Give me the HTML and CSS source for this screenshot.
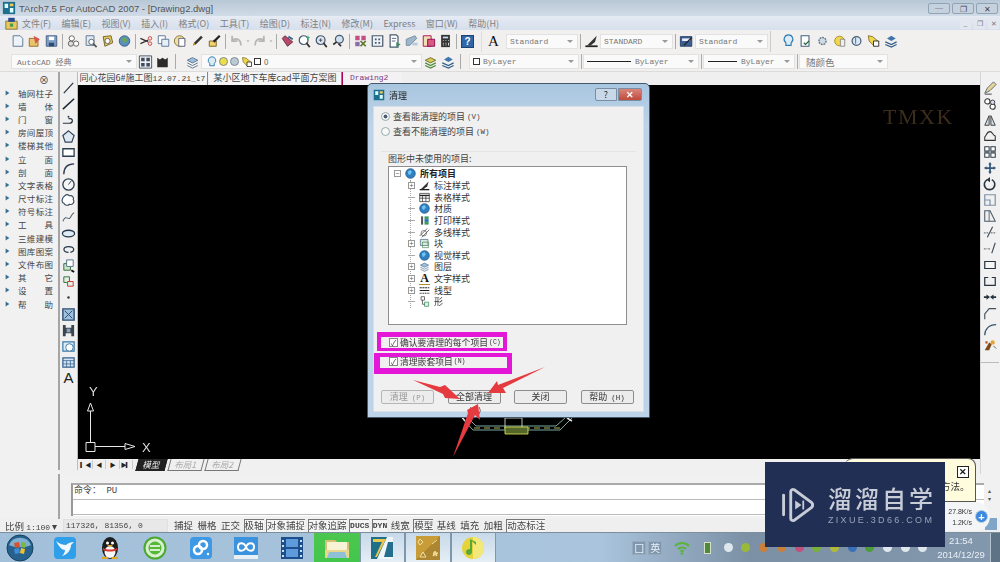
FILE: index.html
```html
<!DOCTYPE html>
<html lang="zh">
<head>
<meta charset="utf-8">
<title>TArch7.5 For AutoCAD 2007</title>
<link rel="stylesheet" href="styles.css">
</head>
<body>
<svg class="sprite" width="0" height="0">
  <symbol id="new" viewBox="0 0 16 16"><path d="M3 2h8l3 3v9H3z" fill="#eef3fa" stroke="#51708f"/></symbol>
  <symbol id="open" viewBox="0 0 16 16"><path d="M2 5h10v9H2z" fill="#e9c46a" stroke="#8a6a25"/><path d="M7 2l7 4-5 5z" fill="#d9534f"/></symbol>
  <symbol id="save" viewBox="0 0 16 16"><path d="M2 2h12v12H2z" fill="#7d9cc4" stroke="#3f5b80"/><path d="M5 3h6v4H5z" fill="#fff"/><path d="M5 10h6v4H5z" fill="#2d4a70"/></symbol>
  <symbol id="print" viewBox="0 0 16 16"><circle cx="6" cy="5" r="3" fill="#fff" stroke="#555"/><circle cx="5" cy="11" r="3" fill="#ddd" stroke="#555"/><circle cx="11" cy="11" r="3" fill="#fff" stroke="#555"/></symbol>
  <symbol id="prev" viewBox="0 0 16 16"><path d="M3 2h9v11H3z" fill="#dfe9f5" stroke="#52708f"/><circle cx="9" cy="9" r="3" fill="#fff" stroke="#555"/><path d="M11 11l4 4" stroke="#555" stroke-width="2"/></symbol>
  <symbol id="pub" viewBox="0 0 16 16"><path d="M3 3l9-1 2 8-9 4z" fill="#e6c85a" stroke="#6d5c22"/><circle cx="8" cy="8" r="3" fill="#fff" stroke="#555"/></symbol>
  <symbol id="globe" viewBox="0 0 16 16"><circle cx="8" cy="8" r="6" fill="#5b8fc4" stroke="#33597f"/><path d="M5 5l5-1 1 4-4 3z" fill="#69a84f"/></symbol>
  <symbol id="cut" viewBox="0 0 16 16"><path d="M1 5l9 4M1 11l9-4" stroke="#333" stroke-width="1.4" fill="none"/><circle cx="12" cy="5" r="2" fill="none" stroke="#c33"/><circle cx="12" cy="11" r="2" fill="none" stroke="#c33"/></symbol>
  <symbol id="copy" viewBox="0 0 16 16"><path d="M2 2h8v9H2z" fill="#fff" stroke="#4f6f93"/><path d="M6 6h8v8H6z" fill="#e6eef8" stroke="#4f6f93"/></symbol>
  <symbol id="paste" viewBox="0 0 16 16"><circle cx="7" cy="8" r="6" fill="#efe1a0" stroke="#7e6e2e"/><path d="M6 5h7v9H6z" fill="#fff" stroke="#557"/></symbol>
  <symbol id="brush" viewBox="0 0 16 16"><path d="M3 13l3-1 8-8-2-2-8 8z" fill="#333"/><path d="M3 13l3-1-2-2z" fill="#d8a21e"/></symbol>
  <symbol id="brush2" viewBox="0 0 16 16"><path d="M2 8h8v6H2z" fill="#f0d36a" stroke="#6f5c20"/><path d="M7 9l7-7" stroke="#222" stroke-width="2.5"/></symbol>
  <symbol id="undo" viewBox="0 0 16 16"><path d="M13 13C13 6 8 4 3 7M3 2v6h6" fill="none" stroke="#b5b5b5" stroke-width="2"/></symbol>
  <symbol id="redo" viewBox="0 0 16 16"><path d="M3 13C3 6 8 4 13 7M13 2v6H7" fill="none" stroke="#b5b5b5" stroke-width="2"/></symbol>
  <symbol id="drop" viewBox="0 0 8 16"><path d="M2 7h4L4 10z" fill="#bbb"/></symbol>
  <symbol id="pan" viewBox="0 0 16 16"><path d="M2 5l6 9 6-5-9-7z" fill="#b9486a" stroke="#5a2a3a"/><path d="M9 3l5 3" stroke="#38618c" stroke-width="2"/></symbol>
  <symbol id="zoom1" viewBox="0 0 16 16"><circle cx="7" cy="7" r="5" fill="#fff" stroke="#44586e" stroke-width="1.4"/><path d="M10 10l4 5" stroke="#333" stroke-width="2"/><path d="M12 2v5M10 4h4" stroke="#2a6"/></symbol>
  <symbol id="zoom2" viewBox="0 0 16 16"><circle cx="7" cy="7" r="5" fill="#dbe7f3" stroke="#44586e" stroke-width="1.4"/><path d="M10 10l4 5" stroke="#333" stroke-width="2"/><path d="M5 7h4M7 5v4" stroke="#444"/></symbol>
  <symbol id="zoom3" viewBox="0 0 16 16"><circle cx="9" cy="6" r="4.5" fill="#cfe0ee" stroke="#44586e" stroke-width="1.4"/><path d="M6 9l-4 3M8 11l3 3" stroke="#333" stroke-width="2"/></symbol>
  <symbol id="prop" viewBox="0 0 16 16"><path d="M2 2h5v5H2zM9 2h5v5H9z" fill="#c44d84"/><path d="M2 9h5v5H2z" fill="#8a6bb1"/><path d="M8 8l6 6M14 8l-6 6" stroke="#5a7a2c" stroke-width="2"/></symbol>
  <symbol id="dc" viewBox="0 0 16 16"><path d="M2 2h12v12H2z" fill="#eef2f6" stroke="#47596d" stroke-width="1.4"/><path d="M5 5h2v2H5zM9 5h2v2H9zM5 9h2v2H5zM9 9h2v2H9z" fill="#47596d"/></symbol>
  <symbol id="tool" viewBox="0 0 16 16"><path d="M3 1h7l2 2v12H3z" fill="#fff" stroke="#485c72" stroke-width="1.4"/><path d="M5 5h5M5 8h4" stroke="#485c72"/><path d="M10 9l5 3-5 3z" fill="#486"/></symbol>
  <symbol id="sheet" viewBox="0 0 16 16"><path d="M2 6l10-4 2 3-8 8H2z" fill="#9fb5c9" stroke="#6f8ba3"/><path d="M9 10h6v3H9z" fill="#b8c9d9"/></symbol>
  <symbol id="mark" viewBox="0 0 16 16"><path d="M2 2h9v12H2z" fill="#f1dfb2" stroke="#a05"/><path d="M7 6h8v8H7z" fill="#d9597f" stroke="#805"/></symbol>
  <symbol id="calc" viewBox="0 0 16 16"><path d="M3 1h10v14H3z" fill="#333"/><path d="M5 3h6v2H5z" fill="#cde"/><path d="M5 7h1v1H5zM8 7h1v1H8zM11 7h1v1h-1zM5 10h1v1H5zM8 10h1v1H8zM11 10h1v3h-1zM5 12h1v1H5zM8 12h1v1H8z" fill="#eee"/></symbol>
  <symbol id="dim" viewBox="0 0 16 16"><path d="M1 14h14" stroke="#222" stroke-width="2"/><path d="M3 13L14 2l-2 7-5 4z" fill="#333"/></symbol>
  <symbol id="tstyle" viewBox="0 0 16 16"><path d="M1 3h13v11H1z" fill="#3a5f92" stroke="#223e66"/><path d="M3 5h9v3H3z" fill="#eef"/><path d="M5 13l9-9" stroke="#222" stroke-width="1.5"/></symbol>
  <symbol id="bulb" viewBox="0 0 16 16"><path d="M8 1a5 5 0 0 0-3 9v3h6v-3a5 5 0 0 0-3-9z" fill="#dcebf5" stroke="#2f7fb5" stroke-width="1.3"/></symbol>
  <symbol id="doc" viewBox="0 0 16 16"><path d="M3 2h9v12H3z" fill="#fff" stroke="#40617f" stroke-width="1.2"/><path d="M6 10l2 2 4-4" stroke="#263" fill="none" stroke-width="1.4"/></symbol>
  <symbol id="gear" viewBox="0 0 16 16"><circle cx="8" cy="8" r="4" fill="#cfdbe6" stroke="#5b7186" stroke-width="1.6" stroke-dasharray="2 1"/></symbol>
  <symbol id="yel" viewBox="0 0 16 16"><circle cx="8" cy="8" r="5.5" fill="#f2d64b" stroke="#a08820"/><path d="M9 6h5v8H9z" fill="#eee" stroke="#888"/></symbol>
  <symbol id="lock" viewBox="0 0 16 16"><circle cx="8" cy="8" r="5" fill="#dce7f2" stroke="#45607f" stroke-width="1.4"/><path d="M7 4v7" stroke="#45607f"/></symbol>
  <symbol id="layertag" viewBox="0 0 16 16"><path d="M2 2l5 1 7 6-5 5-6-6z" fill="#f0d54e" stroke="#7d7022"/><path d="M8 8h6v6H8z" fill="#fff" stroke="#222"/></symbol>
  <symbol id="stack" viewBox="0 0 16 16"><path d="M2 6l6-3 6 3-6 3z" fill="#9ec0dd" stroke="#52708c"/><path d="M2 9l6 3 6-3M2 12l6 3 6-3" fill="none" stroke="#52708c"/></symbol>
  <symbol id="stack2" viewBox="0 0 16 16"><path d="M2 6l6-3 6 3-6 3z" fill="#d6c955" stroke="#5e6d26"/><path d="M2 9l6 3 6-3M2 12l6 3 6-3" fill="none" stroke="#4f8a3a" stroke-width="1.4"/></symbol>
  <symbol id="stack3" viewBox="0 0 16 16"><path d="M4 5l5-3 5 3-5 3z" fill="#3e76ad"/><path d="M2 9l7 3 6-3M2 12l7 3 6-3" fill="none" stroke="#345f8a" stroke-width="1.4"/></symbol>
  <symbol id="qr" viewBox="0 0 16 16"><path d="M1 1h14v14H1z" fill="#eee" stroke="#3d4c5e"/><path d="M3 3h4v4H3zM9 3h4v4H9zM3 9h4v4H3zM9 9h4v4H9z" fill="#3d4c5e"/></symbol>
  <symbol id="bl" viewBox="0 0 16 16"><path d="M2 3l3 2 3-2 3 2 3-2v11H2z" fill="#2b2b2b"/></symbol>
  <symbol id="l" viewBox="0 0 16 16"><path d="M3 14L13 3" stroke="#2a3440" stroke-width="1.3"/></symbol>
  <symbol id="l2" viewBox="0 0 16 16"><path d="M2 14L14 3" stroke="#1d2732" stroke-width="1.6"/></symbol>
  <symbol id="pl" viewBox="0 0 16 16"><path d="M2 12h7c4 0 4-5 1-5H8" fill="none" stroke="#2a3440" stroke-width="1.3"/><circle cx="8" cy="5" r="1" fill="#2a3440"/></symbol>
  <symbol id="poly" viewBox="0 0 16 16"><path d="M8 2l6 5-2.500 7h-7L2 7z" fill="#dfe9f2" stroke="#32465c" stroke-width="1.3"/></symbol>
  <symbol id="rect" viewBox="0 0 16 16"><path d="M2 4h12v8H2z" fill="#fff" stroke="#2f3e4f" stroke-width="1.4"/></symbol>
  <symbol id="arc" viewBox="0 0 16 16"><path d="M3 14C3 7 7 3 14 3" fill="none" stroke="#2f3e4f" stroke-width="1.4"/></symbol>
  <symbol id="circ" viewBox="0 0 16 16"><circle cx="8" cy="8" r="6" fill="#f5f5f5" stroke="#2f3e4f" stroke-width="1.4"/><path d="M8 8l3-4" stroke="#2f3e4f"/></symbol>
  <symbol id="cloud" viewBox="0 0 16 16"><path d="M4 3c2-2 4-1 5 0 3-1 5 2 4 4 2 3-1 6-4 5-2 2-5 1-6-1-3-1-2-6 1-8z" fill="#fff" stroke="#3a4a5a" stroke-width="1.2"/></symbol>
  <symbol id="spl" viewBox="0 0 16 16"><path d="M2 12c3-7 5-2 7-3s2-5 5-6" fill="none" stroke="#55626f" stroke-width="1.1"/></symbol>
  <symbol id="ell" viewBox="0 0 16 16"><ellipse cx="8" cy="8" rx="6.500" ry="3.500" fill="#dfeaf3" stroke="#25384c" stroke-width="1.4"/></symbol>
  <symbol id="ellarc" viewBox="0 0 16 16"><path d="M8 11C2 11 1 5 8 5s7 5 2 6" fill="none" stroke="#25384c" stroke-width="1.3"/></symbol>
  <symbol id="ins" viewBox="0 0 16 16"><path d="M3 6h7v7H3z" fill="#cfe3cf" stroke="#2d6b34"/><path d="M6 2h7v7H6z" fill="#fff" stroke="#52708c"/><path d="M11 13l3 2" stroke="#111" stroke-width="2"/></symbol>
  <symbol id="blk" viewBox="0 0 16 16"><path d="M3 3h6v6H3z" fill="#e3f0e3" stroke="#2f6f35"/><path d="M7 8h6v5H7z" fill="#e3f0e3" stroke="#c33"/></symbol>
  <symbol id="pt" viewBox="0 0 16 16"><circle cx="8" cy="8" r="1.300" fill="#2c3a48"/></symbol>
  <symbol id="hatch" viewBox="0 0 16 16"><path d="M2 2h12v12H2z" fill="#9fc1de" stroke="#2c4d72" stroke-width="1.5"/><path d="M4 12l8-8M4 4l8 8" stroke="#2c4d72"/></symbol>
  <symbol id="grad" viewBox="0 0 16 16"><path d="M2 2h3v3h6V2h3v12h-3v-3H5v3H2z" fill="#3b4450"/><path d="M6 6h4v4H6z" fill="#8ba2b7"/></symbol>
  <symbol id="reg" viewBox="0 0 16 16"><path d="M2 3h12v10H2z" fill="#dfeef6" stroke="#3d7aa6" stroke-width="1.3"/><circle cx="9" cy="9" r="4" fill="#fff" stroke="#3d7aa6"/></symbol>
  <symbol id="tab" viewBox="0 0 16 16"><path d="M2 3h12v10H2z" fill="#d4e4f2" stroke="#34628f" stroke-width="1.3"/><path d="M2 6h12M6 6v7M10 6v7M2 9.500h12" stroke="#34628f" stroke-width=".8"/></symbol>
  <symbol id="erase" viewBox="0 0 16 16"><path d="M2 14l3-6 7-7 3 3-7 7z" fill="#e4d69a" stroke="#55606a"/><path d="M2 15h8" stroke="#333"/></symbol>
  <symbol id="copy2" viewBox="0 0 16 16"><circle cx="5" cy="5" r="3" fill="#fff" stroke="#333" stroke-width="1.2"/><circle cx="11" cy="11" r="3" fill="#fff" stroke="#333" stroke-width="1.2"/><circle cx="11" cy="6" r="2.500" fill="#dde" stroke="#333"/></symbol>
  <symbol id="mirror" viewBox="0 0 16 16"><path d="M7 3L2 14h5zM9 3l5 11H9z" fill="#cfdae4" stroke="#333"/></symbol>
  <symbol id="offset" viewBox="0 0 16 16"><path d="M2 13V9c2-1 2-6 6-6 3 0 3 4 6 5v5z" fill="#f2f2f2" stroke="#333" stroke-width="1.2"/></symbol>
  <symbol id="array" viewBox="0 0 16 16"><path d="M2 2h5v5H2zM9 2h5v5H9zM2 9h5v5H2zM9 9h5v5H9z" fill="#fff" stroke="#2f3d4b" stroke-width="1.2"/></symbol>
  <symbol id="move" viewBox="0 0 16 16"><path d="M8 1l2 3H9v3h3V6l3 2-3 2V9H9v3h1l-2 3-2-3h1V9H4v1L1 8l3-2v1h3V4H6z" fill="#35587c"/></symbol>
  <symbol id="rot" viewBox="0 0 16 16"><path d="M5 3a6 6 0 1 0 5 0" fill="none" stroke="#27343f" stroke-width="1.8"/><path d="M8 0v6L4 3z" fill="#27343f"/></symbol>
  <symbol id="scale" viewBox="0 0 16 16"><path d="M2 2h12v12H2z" fill="#f0f0f0" stroke="#7e93a6" stroke-width="1.4"/><path d="M2 8h6v6" fill="none" stroke="#7e93a6" stroke-width="1.4"/></symbol>
  <symbol id="stretch" viewBox="0 0 16 16"><path d="M2 2h6l6 12H2z" fill="#f0f0f0" stroke="#4a5a69" stroke-width="1.2"/><path d="M7 2v12" stroke="#4a5a69"/></symbol>
  <symbol id="trim" viewBox="0 0 16 16"><path d="M1 9h5M9 9h6" stroke="#3e4a55" stroke-dasharray="2 1"/><path d="M5 14L11 2" stroke="#3e4a55" stroke-width="1.2"/></symbol>
  <symbol id="ext" viewBox="0 0 16 16"><path d="M1 9h4M6 9h3" stroke="#3e4a55" stroke-dasharray="2 1"/><path d="M10 14L14 2" stroke="#3e4a55" stroke-width="1.2"/></symbol>
  <symbol id="brk" viewBox="0 0 16 16"><path d="M2 4h12v8H2z" fill="#f6f6f6" stroke="#27343f" stroke-width="1.4"/></symbol>
  <symbol id="brk2" viewBox="0 0 16 16"><path d="M6 4H2v9h12V4h-4" fill="none" stroke="#27343f" stroke-width="1.4"/></symbol>
  <symbol id="join" viewBox="0 0 16 16"><path d="M1 8h5M10 8h5" stroke="#27343f" stroke-width="2"/><path d="M8 8L4 5v6zM8 8l4-3v6z" fill="#27343f"/></symbol>
  <symbol id="chamf" viewBox="0 0 16 16"><path d="M2 15V9l5-6h8" fill="none" stroke="#45515c" stroke-width="1.3"/></symbol>
  <symbol id="fillet" viewBox="0 0 16 16"><path d="M2 15C2 8 7 3 15 3" fill="none" stroke="#36536f" stroke-width="1.4"/></symbol>
  <symbol id="expl" viewBox="0 0 16 16"><path d="M2 14l5-9 3 2-3 7z" fill="#7a4a1e"/><circle cx="11" cy="5" r="2.500" fill="#e2a53a"/><circle cx="4" cy="5" r="1.500" fill="#c63"/><path d="M12 9l3 3" stroke="#555"/></symbol>
  <symbol id="ptri" viewBox="0 0 8 8"><path d="M1 0l6 4-6 4z" fill="#3a6f95"/></symbol>
  <symbol id="acad" viewBox="0 0 16 16"><path d="M1 1h14v14H1z" fill="#1e6f8f"/><path d="M3 3h4v5H3zM9 8h4v5H9z" fill="#dff"/><path d="M9 3h4v3H9z" fill="#ec5"/></symbol>
  <symbol id="menuic" viewBox="0 0 16 16"><path d="M1 5h14v10H1z" fill="#e7c860" stroke="#7b6a24"/><path d="M4 1h8v5H4z" fill="#274a8f"/><path d="M6 8h4v4H6z" fill="#4a9c48"/></symbol>
  <symbol id="earth" viewBox="0 0 16 16"><circle cx="8" cy="8" r="7" fill="#2f81c4" stroke="#1d4f7d"/><path d="M4 5l4-2 2 3-3 4-2-1z" fill="#6fc3ef"/></symbol>
  <symbol id="shape" viewBox="0 0 16 16"><path d="M3 1h5v5H3z" fill="#fff" stroke="#333"/><path d="M8 9h6v6H8z" fill="#dff0e0" stroke="#2b8a55"/><path d="M5 6v6h3" fill="none" stroke="#333"/></symbol>
  <symbol id="color" viewBox="0 0 16 16"><path d="M3 2h3v12H3z" fill="#555"/><path d="M8 2h6v4H8z" fill="#3a9a58"/><path d="M8 6h6v4H8z" fill="#2a6fb0"/><path d="M8 10h6v4H8z" fill="#3a9a58"/></symbol>
  <symbol id="mls" viewBox="0 0 16 16"><path d="M1 13L12 2M4 15L15 4" stroke="#333" fill="none"/><circle cx="7" cy="9" r="4" fill="none" stroke="#555"/></symbol>
  <symbol id="block" viewBox="0 0 16 16"><path d="M2 2h11v9H2z" fill="#d9e9dd" stroke="#41617f"/><path d="M5 6h9v8H5z" fill="none" stroke="#4c8a59"/></symbol>
  <symbol id="lt" viewBox="0 0 16 16"><path d="M1 4h14" stroke="#222" stroke-width="1.5" stroke-dasharray="3 1"/><path d="M1 8h14" stroke="#222" stroke-width="1.5"/><path d="M1 12h14" stroke="#222" stroke-width="1.5" stroke-dasharray="1.500 1"/></symbol>
  <symbol id="table" viewBox="0 0 16 16"><path d="M1 2h14v12H1z" fill="#fff" stroke="#222"/><path d="M1 5h14" stroke="#222" stroke-width="2"/><path d="M1 9h14M5 5v9M10 5v9" stroke="#222"/></symbol>

  <symbol id="t-orb" viewBox="0 0 28 28"><circle cx="14" cy="14" r="13" fill="#27628f" stroke="#16405f"/><path d="M3 11a12 12 0 0 1 22 0c-6 3-16 3-22 0z" fill="#7fb0d0"/><path d="M8 9l5-1 1 5-5 1z" fill="#d9522f"/><path d="M15 8l5 1-1 5-4-1z" fill="#7cb83a"/><path d="M8 15l5-1 1 5-5 1z" fill="#3f8bd8"/><path d="M15 14l4 1-1 5-4-1z" fill="#eec12f"/></symbol>
  <symbol id="t-bird" viewBox="0 0 24 24"><rect x="1" y="1" width="22" height="22" rx="4" fill="#2f9fea"/><path d="M3 5c4 3 7 4 10 4 2-2 5-3 8-3l-3 3c0 6-5 10-9 11 2-2 3-4 3-6-3 0-6-3-9-9z" fill="#f2f8fd"/></symbol>
  <symbol id="t-qq" viewBox="0 0 24 24"><ellipse cx="12" cy="12" rx="8" ry="11" fill="#1d1d1d"/><ellipse cx="12" cy="16" rx="5.500" ry="6" fill="#f7f7f7"/><circle cx="9.500" cy="7" r="1.500" fill="#fff"/><circle cx="14.500" cy="7" r="1.500" fill="#fff"/><path d="M9 9h6l-3 2z" fill="#e8a51e"/><path d="M5 12c4 2 10 2 14 0v2c-4 2-10 2-14 0z" fill="#d8342c"/><path d="M4 21h6v2H4zM14 21h6v2h-6z" fill="#e8a51e"/></symbol>
  <symbol id="t-green" viewBox="0 0 24 24"><circle cx="12" cy="12" r="10.500" fill="#d9f0ce" stroke="#4aa82f" stroke-width="2"/><circle cx="12" cy="12" r="6.500" fill="#55b83a"/><path d="M7 10h10M7 14h10" stroke="#fff" stroke-width="1.500"/></symbol>
  <symbol id="t-baidu" viewBox="0 0 24 24"><rect x="1" y="1" width="22" height="22" rx="4" fill="#3f98e4"/><circle cx="9" cy="14" r="4" fill="none" stroke="#fff" stroke-width="2.500"/><circle cx="14" cy="9" r="4" fill="none" stroke="#fff" stroke-width="2.500"/><circle cx="19" cy="18" r="1.200" fill="#fff"/></symbol>
  <symbol id="t-cloud" viewBox="0 0 24 24"><rect x="0" y="1" width="24" height="18" fill="#3b92de"/><path d="M0 19h24v4H0z" fill="#e8f0f6"/><path d="M4 11c0-5 6-5 8 0s8 5 8 0-6-5-8 0-8 5-8 0z" fill="none" stroke="#fff" stroke-width="2"/></symbol>
  <symbol id="t-film" viewBox="0 0 24 24"><rect x="1" y="1" width="22" height="22" fill="#1c4f8c"/><path d="M6 3h12v8H6zM6 13h12v8H6z" fill="#5e9bdc"/><path d="M2 4h2v2H2zM2 9h2v2H2zM2 14h2v2H2zM2 19h2v2H2zM20 4h2v2h-2zM20 9h2v2h-2zM20 14h2v2h-2zM20 19h2v2h-2z" fill="#cfe0f2"/></symbol>
  <symbol id="t-folder" viewBox="0 0 28 24"><path d="M2 4h10l2 2h12v16H2z" fill="#d7c177"/><path d="M4 6h20v9H4z" fill="#f9f3d6"/><path d="M2 14h24v8H2z" fill="#e9d68c"/><path d="M6 16h16l2 6H4z" fill="#8fc0d8"/></symbol>
  <symbol id="t-seven" viewBox="0 0 24 24"><path d="M1 1h22v22H1z" fill="#eef6fa"/><path d="M1 1h16L7 23H1z" fill="#1e7089"/><path d="M3 3h13L7 21H5l7-15H3z" fill="#e9c84f"/><path d="M18 6h5v15h-9z" fill="#236f8c"/></symbol>
  <symbol id="t-gold" viewBox="0 0 24 24"><rect x="0" y="0" width="24" height="24" fill="#ad8631"/><path d="M0 0h24L0 24z" fill="#c89d38"/><path d="M4 3l3 3-3 3-2-3zM16 8l5-4M4 21l3-5 3 5zM17 20l2-5 2 5-4-3h5z" fill="none" stroke="#f2e1a6"/></symbol>
  <symbol id="t-music" viewBox="0 0 24 24"><circle cx="12" cy="12" r="11" fill="#e6d23a"/><path d="M12 1a11 11 0 0 1 0 22z" fill="#f2e97a"/><path d="M11 5v11a3 3 0 1 1-2-2.800V3l6 3v3z" fill="#55a83a"/></symbol>
</svg>

<div class="app">
  <header class="title">
    <svg class="title-ic"><use href="#acad"/></svg>
    <span class="title-text">TArch7.5 For AutoCAD 2007 - [Drawing2.dwg]</span>
    <div class="win-btns"><i class="wb">&#9472;</i><i class="wb w2">&#10064;</i><i class="wb">&#10005;</i></div>
  </header>
  <nav class="menu">
    <svg class="menu-ic"><use href="#menuic"/></svg>
    <span>文件(F)</span><span>编辑(E)</span><span>视图(V)</span><span>插入(I)</span><span>格式(O)</span><span>工具(T)</span><span>绘图(D)</span><span>标注(N)</span><span>修改(M)</span><span>Express</span><span>窗口(W)</span><span>帮助(H)</span>
    <div class="doc-btns"><i>_</i><i>&#10064;</i><i>&#10005;</i></div>
  </nav>

  <div class="tb tb1">
    <svg class="ic"><use href="#new"/></svg><svg class="ic"><use href="#open"/></svg><svg class="ic"><use href="#save"/></svg><b class="sep"></b>
    <svg class="ic"><use href="#print"/></svg><svg class="ic"><use href="#prev"/></svg><svg class="ic"><use href="#pub"/></svg><svg class="ic"><use href="#globe"/></svg><b class="sep"></b>
    <svg class="ic"><use href="#cut"/></svg><svg class="ic"><use href="#copy"/></svg><svg class="ic"><use href="#paste"/></svg><svg class="ic"><use href="#brush"/></svg><svg class="ic"><use href="#brush2"/></svg><b class="sep"></b>
    <svg class="ic"><use href="#undo"/></svg><svg class="dr"><use href="#drop"/></svg><svg class="ic"><use href="#redo"/></svg><svg class="dr"><use href="#drop"/></svg><b class="sep"></b>
    <svg class="ic"><use href="#pan"/></svg><svg class="ic"><use href="#zoom1"/></svg><svg class="ic"><use href="#zoom2"/></svg><svg class="ic"><use href="#zoom3"/></svg><b class="sep"></b>
    <svg class="ic"><use href="#prop"/></svg><svg class="ic"><use href="#dc"/></svg><svg class="ic"><use href="#tool"/></svg><svg class="ic"><use href="#sheet"/></svg><svg class="ic"><use href="#mark"/></svg><svg class="ic"><use href="#calc"/></svg><b class="sep"></b>
    <span class="ic-help">?</span><b class="bar"></b>
    <span class="ic-a">A</span>
    <div class="combo c72 mono"><span>Standard</span></div><b class="sep"></b>
    <svg class="ic"><use href="#dim"/></svg>
    <div class="combo c73 mono"><span>STANDARD</span></div><b class="sep"></b>
    <svg class="ic"><use href="#tstyle"/></svg>
    <div class="combo c73 mono"><span>Standard</span></div><b class="bar2"></b>
    <svg class="ic first"><use href="#bulb"/></svg><svg class="ic"><use href="#doc"/></svg><svg class="ic"><use href="#gear"/></svg><svg class="ic"><use href="#yel"/></svg><svg class="ic"><use href="#lock"/></svg><svg class="ic"><use href="#layertag"/></svg><svg class="ic"><use href="#stack3"/></svg>
  </div>

  <div class="tb tb2">
    <div class="combo c126"><span class="mono">AutoCAD 经典</span></div>
    <svg class="ic"><use href="#qr"/></svg><svg class="ic"><use href="#bl"/></svg><b class="sep wide"></b>
    <svg class="ic"><use href="#stack"/></svg>
    <div class="combo c221">
      <svg class="mini"><use href="#bulb"/></svg><i class="dot y"></i><i class="dot g"></i><svg class="mini"><use href="#layertag"/></svg><i class="sq"></i><span class="layer0">0</span>
    </div>
    <svg class="ic"><use href="#stack2"/></svg><svg class="ic"><use href="#stack3"/></svg><b class="sep wide"></b>
    <div class="combo c110 mono"><i class="sq"></i><span>ByLayer</span></div><b class="sep"></b>
    <div class="combo c116 mono"><i class="ln l1"></i><span>ByLayer</span></div><b class="sep"></b>
    <div class="combo c92 mono"><i class="ln l2"></i><span>ByLayer</span></div><b class="sep"></b>
    <div class="combo c89"><span class="rand">随颜色</span></div>
  </div>

  <div class="work">
    <aside class="tarch">
      <div class="tarch-close">&#8855;</div>
      <ul class="tarch-list">
        <li><svg><use href="#ptri"/></svg><span>轴网柱子</span></li>
        <li><svg><use href="#ptri"/></svg><span>墙 体</span></li>
        <li><svg><use href="#ptri"/></svg><span>门 窗</span></li>
        <li><svg><use href="#ptri"/></svg><span>房间屋顶</span></li>
        <li><svg><use href="#ptri"/></svg><span>楼梯其他</span></li>
        <li><svg><use href="#ptri"/></svg><span>立 面</span></li>
        <li><svg><use href="#ptri"/></svg><span>剖 面</span></li>
        <li><svg><use href="#ptri"/></svg><span>文字表格</span></li>
        <li><svg><use href="#ptri"/></svg><span>尺寸标注</span></li>
        <li><svg><use href="#ptri"/></svg><span>符号标注</span></li>
        <li><svg><use href="#ptri"/></svg><span>工 具</span></li>
        <li><svg><use href="#ptri"/></svg><span>三维建模</span></li>
        <li><svg><use href="#ptri"/></svg><span>图库图案</span></li>
        <li><svg><use href="#ptri"/></svg><span>文件布图</span></li>
        <li><svg><use href="#ptri"/></svg><span>其 它</span></li>
        <li><svg><use href="#ptri"/></svg><span>设 置</span></li>
        <li><svg><use href="#ptri"/></svg><span>帮 助</span></li>
      </ul>
    </aside>
    <div class="vtb">
      <svg><use href="#l"/></svg><svg><use href="#l2"/></svg><svg><use href="#pl"/></svg><svg><use href="#poly"/></svg><svg><use href="#rect"/></svg><svg><use href="#arc"/></svg><svg><use href="#circ"/></svg><svg><use href="#cloud"/></svg><svg><use href="#spl"/></svg><svg><use href="#ell"/></svg><svg><use href="#ellarc"/></svg><svg><use href="#ins"/></svg><svg><use href="#blk"/></svg><svg><use href="#pt"/></svg><svg><use href="#hatch"/></svg><svg><use href="#grad"/></svg><svg><use href="#reg"/></svg><svg><use href="#tab"/></svg><span class="vtb-a">A</span>
    </div>
    <main class="center">
      <div class="tabs">
        <span class="tab t1">同心花园6#施工图<em>12.07.21_t7</em></span>
        <span class="tab t2">某小区地下车库cad平面方案图</span>
        <span class="tab t3">Drawing2</span>
      </div>
      <div class="canvas">
        <div class="ucs">
          <span class="ucs-y">Y</span><span class="ucs-x">X</span>
          <svg width="80" height="62" viewBox="0 0 80 62"><path d="M5.500 47V16M2.500 16l3-8 3 8zM10 51.500h30M40 48.500l10 3-10 3z" fill="none" stroke="#e8e8e8"/><path d="M1 47.500h9v9H1z" fill="none" stroke="#e8e8e8"/></svg>
        </div>
        <div class="tmxk">TMXK</div>
        <svg class="plan" width="130" height="24" viewBox="0 0 130 24">
          <path d="M2 2l11 12h87l12-12M8 2l8 8h80l9-8" fill="none" stroke="#9ad5c8" stroke-width=".8"/>
          <path d="M14 12h88" stroke="#e6e26a" stroke-width=".8" stroke-dasharray="6 4"/>
          <path d="M45 2h17v10H45z" fill="none" stroke="#e8f0d0" stroke-width=".8"/>
          <path d="M45 11h23v7H45z" fill="#55662a" stroke="#e8ee55" stroke-width=".8"/>
          <path d="M2 1l3 4M107 2l5 3" stroke="#ddd" stroke-width="1.500"/>
        </svg>
      </div>
      <div class="layouts">
        <span class="nav">&#9614;&#9664;</span><span class="nav">&#9664;</span><span class="nav">&#9654;</span><span class="nav">&#9654;&#9614;</span>
        <span class="lt active">模型</span><span class="lt">布局1</span><span class="lt">布局2</span>
      </div>
      <div class="hband"></div>
    </main>
    <div class="rtb">
      <svg><use href="#erase"/></svg><svg><use href="#copy2"/></svg><svg><use href="#mirror"/></svg><svg><use href="#offset"/></svg><svg><use href="#array"/></svg><svg><use href="#move"/></svg><svg><use href="#rot"/></svg><svg><use href="#scale"/></svg><svg><use href="#stretch"/></svg><svg><use href="#trim"/></svg><svg><use href="#ext"/></svg><svg><use href="#brk"/></svg><svg><use href="#brk2"/></svg><svg><use href="#join"/></svg><svg><use href="#chamf"/></svg><svg><use href="#fillet"/></svg><svg><use href="#expl"/></svg>
      <b class="rtb-sep"></b>
    </div>
  </div>

  <section class="cmd">
    <div class="cmd-box">
      <div class="cmd-line mono">命令： PU</div>
      <div class="cmd-line"></div>
    </div>
    <div class="cmd-scroll"><span>&#9652;</span><span>&#9662;</span></div>
  </section>

  <footer class="status">
    <span class="scale">比例 <em>1:100</em> &#9662;</span>
    <span class="coords mono">117326, 81356, 0</span>
    <span class="st">捕捉</span><span class="st">栅格</span><span class="st">正交</span><span class="st on">极轴</span><span class="st on">对象捕捉</span><span class="st on">对象追踪</span><span class="st on mono">DUCS</span><span class="st on mono">DYN</span><span class="st">线宽</span><span class="st on">模型</span><span class="st">基线</span><span class="st">填充</span><span class="st">加粗</span><span class="st on">动态标注</span>
  </footer>

  <div class="taskbar">
    <svg class="orb"><use href="#t-orb"/></svg>
    <div class="apps">
      <span class="app-i"><svg class="a"><use href="#t-bird"/></svg></span>
      <span class="app-i"><svg class="a"><use href="#t-qq"/></svg></span>
      <span class="app-i"><svg class="a"><use href="#t-green"/></svg></span>
      <span class="app-i"><svg class="a"><use href="#t-baidu"/></svg></span>
      <span class="app-i"><svg class="a"><use href="#t-cloud"/></svg></span>
      <span class="app-i"><svg class="a"><use href="#t-film"/></svg></span>
      <span class="app-i run-g"><svg class="a wide-a"><use href="#t-folder"/></svg></span>
      <span class="app-i run"><svg class="a"><use href="#t-seven"/></svg></span>
      <span class="app-i run"><svg class="a"><use href="#t-gold"/></svg></span>
      <span class="app-i run"><svg class="a"><use href="#t-music"/></svg></span>
    </div>
    <div class="tray">
      <span class="lang"><i>囗</i><i class="ying">英</i></span>
      <svg class="wifi" width="18" height="14" viewBox="0 0 18 14"><path d="M2 5c4-4 10-4 14 0M5 8c2-2 6-2 8 0M7.500 10.500c1-1 2-1 3 0" fill="none" stroke="#5ab33a" stroke-width="1.800"/><circle cx="9" cy="12.500" r="1.300" fill="#5ab33a"/></svg>
      <i class="batt"></i>
      <i class="tr-i c1"></i><i class="tr-i c2"></i><i class="tr-i c3"></i><i class="tr-i c3"></i><i class="tr-i c4"></i><i class="tr-i c5"></i><i class="tr-i c6"></i><i class="tr-i c7"></i><i class="tr-i c8"></i><i class="tr-i c1"></i><i class="tr-i c1"></i><i class="tr-i c1"></i>
      <div class="clock"><span>21:54</span><span>2014/12/29</span></div>
      <div class="show-desk"></div>
    </div>
  </div>
</div>

<!-- Purge dialog floating over the drawing -->
<div class="dlg">
  <div class="dlg-title">
    <svg class="dlg-ic"><use href="#acad"/></svg><span>清理</span>
    <i class="dlg-q">?</i><i class="dlg-x">&#10005;</i>
  </div>
  <div class="dlg-body">
    <label class="radio"><i class="rd sel"></i>查看能清理的项目 <em>(V)</em></label>
    <label class="radio"><i class="rd"></i>查看不能清理的项目 <em>(W)</em></label>
    <div class="group">
      <div class="group-h">图形中未使用的项目:</div>
      <div class="tree">
        <div class="row root"><i class="exp">&#8722;</i><svg><use href="#earth"/></svg><strong>所有项目</strong></div>
        <div class="kids">
          <div class="row"><i class="exp">+</i><svg><use href="#dim"/></svg>标注样式</div>
          <div class="row"><i class="noexp"></i><svg><use href="#table"/></svg>表格样式</div>
          <div class="row"><i class="noexp"></i><svg><use href="#earth"/></svg>材质</div>
          <div class="row"><i class="noexp"></i><svg><use href="#color"/></svg>打印样式</div>
          <div class="row"><i class="noexp"></i><svg><use href="#mls"/></svg>多线样式</div>
          <div class="row"><i class="exp">+</i><svg><use href="#block"/></svg>块</div>
          <div class="row"><i class="noexp"></i><svg><use href="#earth"/></svg>视觉样式</div>
          <div class="row"><i class="exp">+</i><svg><use href="#stack"/></svg>图层</div>
          <div class="row"><i class="exp">+</i><span class="txs-i">A</span>文字样式</div>
          <div class="row"><i class="exp">+</i><svg><use href="#lt"/></svg>线型</div>
          <div class="row"><i class="noexp"></i><svg><use href="#shape"/></svg>形</div>
        </div>
      </div>
      <div class="checks">
        <label class="chk"><i class="cb">&#10003;</i>确认要清理的每个项目 <em>(C)</em></label>
        <label class="chk"><i class="cb">&#10003;</i>清理嵌套项目 <em>(N)</em></label>
      </div>
    </div>
    <div class="btns">
      <button class="btn off">清理 <em>(P)</em></button>
      <button class="btn">全部清理 <em>(A)</em></button>
      <button class="btn">关闭</button>
      <button class="btn">帮助 <em>(H)</em></button>
    </div>
  </div>
</div>

<div class="hl hl1"></div>
<div class="hl hl2"></div>

<svg class="arrows" width="200" height="100" viewBox="0 0 200 100">
  <path d="M3 20L30 27L35 25L50 39L35 38L33 34Z" fill="#e53a3f"/>
  <path d="M135 7L88 25L87 21L78 33L96 33L93 28Z" fill="#e53a3f"/>
  <path d="M43 97L58 53L57 50L68 44L70 60L65 55Z" fill="#e53a3f"/>
</svg>

<aside class="tip">
  <span class="tip-x">&#10005;</span><span class="tip-t">方法。</span>
</aside>
<i class="corner"></i>
<div class="speed"><span>27.8K/s<br>1.2K/s</span><i class="plus">+</i></div>

<div class="wm">
  <svg class="wm-logo" width="34" height="36" viewBox="0 0 38 40">
    <path d="M4 9v22" stroke="#c7ccd6" stroke-width="3.200" stroke-linecap="round" fill="none"/>
    <path d="M12 5c0-2 2-3 4-2l19 14c2 2 2 4 0 6L16 37c-2 1-4 0-4-2z" fill="none" stroke="#c7ccd6" stroke-width="3.200"/>
    <path d="M17 15l7 5-7 5z" fill="#c7ccd6"/><path d="M26 15v10" stroke="#c7ccd6" stroke-width="2"/>
  </svg>
  <div class="wm-t"><strong>溜溜自学</strong><span>ZIXUE.3D66.COM</span></div>
</div>
</body>
</html>
```
FILE: styles.css
```css
* { box-sizing: border-box; }
html, body { margin: 0; padding: 0; }
body { width: 1000px; height: 562px; overflow: hidden; position: relative; font-family: "Noto Sans CJK SC", "Liberation Sans", sans-serif; font-size: 9px; color: #333; background: #efefef; }
em, i { font-style: normal; }
.sprite { position: absolute; }
.mono { font-family: "Liberation Mono", "Noto Sans CJK SC", monospace; }

.app { width: 1000px; height: 562px; display: flex; flex-direction: column; filter: blur(.35px); }

.title { height: 16px; display: flex; align-items: center; padding-left: 2px; background: linear-gradient(#b9c8d6, #d0dbe6); }
.title-ic { width: 14px; height: 14px; }
.title-text { margin-left: 3px; font: 9.500px "Liberation Sans", sans-serif; color: #555; }
.win-btns { margin-left: auto; margin-right: 2px; display: flex; gap: 2px; }
.wb { width: 22px; height: 11px; border: 1px solid #8fa3b6; border-radius: 2px; background: #c5d2de; font-size: 8px; line-height: 9px; text-align: center; color: #445; }

.menu { height: 14px; display: flex; align-items: center; padding-left: 5px; background: linear-gradient(#e6ebf4, #d6dfec); color: #808080; font-size: 9px; }
.menu-ic { width: 13px; height: 13px; margin-right: 4px; }
.menu span { margin-right: 10.500px; white-space: nowrap; }
.doc-btns { margin-left: auto; display: flex; gap: 3px; padding-right: 1px; }
.doc-btns i { width: 11px; height: 12px; background: #e3e8f0; font-size: 7px; line-height: 12px; text-align: center; color: #778; }

.tb { display: flex; align-items: center; background: #f1f0ee; }
.tb1 { height: 22px; padding-left: 9px; }
.tb2 { height: 20px; padding-left: 11px; border-bottom: 1px solid #dcdcdc; }
.ic { width: 17px; height: 14px; flex: none; }
.ic.first { margin-left: 9px; }
.ic-help { width: 13px; height: 13px; margin: 0 2px; flex: none; background: #2f67a8; border: 1px solid #1c4373; color: #fff; font: 700 10px/11px "Liberation Sans", sans-serif; text-align: center; }
.ic-a { width: 17px; flex: none; font: 15px/16px "Liberation Serif", serif; color: #111; text-align: center; }
.dr { width: 6px; height: 12px; }
.sep { width: 1px; height: 15px; background: #aaa; margin: 0 2px; flex: none; }
.tb2 .sep { margin: 0 1.500px; }
.tb2 .sep.wide { margin: 0 8px 0 4px; }
.bar { width: 1px; height: 21px; background: #ddd; margin: 0 3px 0 5px; }
.bar2 { width: 1px; height: 21px; background: #ccc; margin-left: 2px; }
.combo { height: 15px; background: #fafafa; border: 1px solid #e2e2e2; display: flex; align-items: center; padding-left: 3px; position: relative; font-size: 8px; color: #777; flex: none; }
.combo::after { content: ""; position: absolute; right: 4px; top: 5px; border: 3px solid transparent; border-top: 3px solid #999; }
.c72 { width: 72px; margin-left: 4px; } .c73 { width: 73px; } .c126 { width: 126px; padding-left: 5px; } .c221 { width: 221px; padding-left: 4px; }
.c110 { width: 110px; padding-left: 3px; } .c116 { width: 116px; } .c92 { width: 92px; } .c89 { width: 89px; padding-left: 6px; }
.mini { width: 12px; height: 12px; margin-right: 1px; }
.dot { width: 9px; height: 9px; border-radius: 50%; margin-right: 2px; border: 1px solid #888; }
.dot.y { background: #e9e04a; } .dot.g { background: #b9cbd8; }
.sq { width: 7px; height: 7px; background: #fff; border: 1px solid #333; margin-right: 3px; flex: none; }
.layer0 { font-size: 8px; color: #666; }
.ln { height: 1px; background: #222; margin-right: 3px; }
.l1 { width: 44px; margin-right: 4px; } .l2 { width: 29px; margin-left: 1px; margin-right: 4px; }
.rand { font-size: 9.500px; color: #777; }

.work { height: 405px; display: flex; background: #efefef; }
.tarch { width: 58px; flex: none; background: #f1f1f1; }
.tarch-close { height: 13px; text-align: right; padding-right: 9px; font-size: 10px; line-height: 14px; color: #444; margin-top: 1px; }
.tarch-list { margin: 0; padding: 0; list-style: none; }
.tarch-list li { height: 13.200px; display: flex; align-items: center; padding-left: 5px; }
.tarch-list svg { width: 5px; height: 6px; margin-right: 8px; flex: none; }
.tarch-list span { width: 35px; font-size: 8.500px; line-height: 12px; color: #444; text-align: justify; text-align-last: justify; }

.vtb { width: 20px; flex: none; display: flex; flex-direction: column; align-items: center; padding-top: 8px; background: #f0f0f0; border-left: 2px solid #a5a5a5; border-right: 1px solid #bbb; }
.vtb svg { width: 15px; height: 15px; margin-bottom: 1.200px; flex: none; }
.vtb-a { font: 15px/14px "Liberation Sans", sans-serif; color: #222; }

.center { flex: 1; min-width: 0; display: flex; flex-direction: column; }
.tabs { height: 13px; display: flex; align-items: flex-end; background: #efefef; }
.tab { height: 13px; font-size: 9px; line-height: 12px; text-align: center; background: #f5f5f5; border-right: 1px solid #888; color: #444; white-space: nowrap; overflow: hidden; }
.t1 { width: 130px; } .t2 { width: 133px; margin-left: 1px; }
.t1 em { font: 8px "Liberation Mono", monospace; }
.t3 { width: 60px; text-align: left; padding-left: 7px; border-left: 1px solid #a05; border-right: 0; font: 8px/12px "Liberation Mono", monospace; color: #7a3b86; background: #f3f1f4; }
.canvas { height: 374px; background: #000; position: relative; }
.ucs { position: absolute; left: 7px; top: 310px; width: 80px; height: 62px; color: #ddd; }
.ucs svg { display: block; }
.ucs-y { position: absolute; left: 4px; top: -11px; font: 13px "Liberation Sans", sans-serif; }
.ucs-x { position: absolute; left: 57px; top: 45px; font: 13px "Liberation Sans", sans-serif; }
.tmxk { position: absolute; left: 805px; top: 19px; font: 22px/26px "Liberation Serif", serif; letter-spacing: 1.500px; color: #3c2c1a; }
.plan { position: absolute; left: 382px; top: 331px; }
.layouts { height: 11px; display: flex; align-items: center; padding-left: 1px; background: #f0f0f0; flex: none; }
.nav { width: 13.500px; font-size: 6px; text-align: center; color: #222; border-right: 1px solid #ccc; letter-spacing: -1px; }
.lt { margin-left: 3px; padding: 0 5px; font-size: 8.500px; line-height: 11px; color: #aaa; border: 1px solid #777; border-top: 0; transform: skewX(-15deg); }
.lt.active { background: #222; color: #eee; margin-left: 4px; border-color: #222; }
.hband { flex: 1; border-bottom: 2px solid #b8b8b8; background: #f0f0f0; margin-left: -20px; }
.rtb { width: 20px; flex: none; display: flex; flex-direction: column; align-items: center; padding: 9px 2px 0 0; border-left: 1px solid #d5d5d5; background: #f1f1f1; }
.rtb svg { width: 14px; height: 14px; margin-bottom: 2.050px; flex: none; }
.rtb-sep { width: 18px; height: 1px; background: #bbb; margin-top: 8px; }

.cmd { height: 45px; display: flex; padding: 9px 5px 0 71px; background: #f1f1f1; margin-top: -3px; position: relative; }
.cmd::before { content: ""; position: absolute; left: 58px; top: 0; bottom: 0; width: 2px; background: #a5a5a5; }
.cmd-box { flex: 1; border-left: 2px solid #999; border-top: 2px solid #aaa; background: #fff; height: 33px; }
.cmd-line { height: 15px; border-bottom: 1px solid #bbb; font-size: 9px; line-height: 13px; color: #444; padding-left: 1px; }
.cmd-scroll { width: 11px; display: flex; flex-direction: column; font-size: 6px; line-height: 8px; text-align: center; color: #555; padding-top: 4px; }

.status { height: 14px; display: flex; align-items: center; padding-left: 5px; background: #efefef; border-top: 1px solid #ddd; font-size: 9.500px; color: #444; margin-top: -1px; }
.scale { width: 58px; white-space: nowrap; } .scale em { font: 8px "Liberation Mono", monospace; }
.coords { width: 105px; height: 13px; background: #e8e8e8; font-size: 8px; line-height: 12px; padding-left: 2px; margin-right: 5px; border: 1px solid #e0e0e0; }
.st { height: 13px; padding: 0 1px; margin-right: 2.500px; line-height: 12px; white-space: nowrap; }
.st.mono { font-size: 8px; font-weight: 700; }
.st.on { border-left: 1px solid #777; border-top: 1px solid #777; background: #f5f5f5; line-height: 11px; padding: 0; }

.taskbar { height: 30px; display: flex; align-items: center; background: linear-gradient(90deg, #a3c0da 0, #a9c4dc 60%, #7b90a5 75%, #8398ad 100%); border-top: 1px solid #7d8f9f; }
.orb { width: 28px; height: 28px; margin-left: 6px; flex: none; }
.apps { display: flex; margin-left: 8px; }
.app-i { width: 45.400px; height: 29px; display: flex; align-items: center; justify-content: center; flex: none; }
.run { background: linear-gradient(#c7d9e9, #e5eef5); border-left: 1px solid #7e97ad; border-right: 1px solid #7e97ad; }
.run-g { background: linear-gradient(#4cc650, #43c64b); }
.a { display: block; width: 24px; height: 24px; }
.wide-a { width: 28px; }

.tray { margin-left: auto; height: 29px; display: flex; align-items: center; }
.lang { display: flex; align-items: center; gap: 2px; font-size: 10px; color: #e5eef5; margin-right: 11px; }
.lang i { padding: 0 1px; border: 1px solid #97a9ba; background: #8098ae; line-height: 12px; }
.wifi { margin-right: 13px; }
.batt { width: 7px; height: 12px; background: #4e8a3a; border: 1px solid #d5e0c8; margin-right: 12.500px; }
.tr-i { width: 9px; height: 9px; border-radius: 50%; margin-right: 8.700px; }
.c1 { background: #dfe7ee; } .c2 { background: #9ab83a; } .c3 { background: #c9803c; } .c4 { background: #c2507c; } .c5 { background: #7ab03a; } .c6 { background: #b2b83a; } .c7 { background: #3a70b8; } .c8 { background: #4d9c3a; }
.clock { display: flex; flex-direction: column; align-items: center; font: 9.500px/14px "Liberation Sans", sans-serif; color: #e9eff5; width: 50px; }
.show-desk { width: 10px; height: 29px; margin-left: 4px; background: #5f7386; border-left: 1px solid #b5c4d2; }

/* floating dialog */
.dlg { position: absolute; left: 367px; top: 83px; width: 283px; height: 335px; background: linear-gradient(#a9c6e0, #bcd3e9 40px); border: 1px solid #45596e; border-radius: 5px 5px 0 0; padding: 0 5px 5px; filter: blur(.35px); }
.dlg-title { height: 22px; display: flex; align-items: center; color: #222; font-size: 9px; position: relative; }
.dlg-ic { width: 12px; height: 12px; margin-right: 4px; }
.dlg-q, .dlg-x { position: absolute; top: 4px; height: 13px; border: 1px solid #7a8ea3; font-size: 9px; line-height: 11px; text-align: center; }
.dlg-q { right: 27px; width: 22px; background: #c8d8e8; border-radius: 2px 0 0 2px; }
.dlg-x { right: 2px; width: 24px; background: linear-gradient(#d9867a, #c04a3c); color: #fff; border-radius: 0 2px 2px 0; font-weight: 700; }
.dlg-body { height: 306px; background: #f0f0f0; border: 1px solid #d8dfe6; padding: 2px 7px; color: #444; }
.radio { display: flex; align-items: center; height: 15px; font-size: 9px; }
.radio em, .btn em { font: 7.500px "Liberation Mono", monospace; margin-left: 2px; }
.chk em { font: 6.500px "Liberation Mono", monospace; margin-left: 1px; }
.rd { width: 9px; height: 9px; border-radius: 50%; border: 1px solid #9aa; background: #f8f8f8; margin-right: 3px; flex: none; }
.rd.sel { background: radial-gradient(circle, #4a5a70 0 35%, #f0f4f8 45%); }
.group { margin-top: 12px; height: 238px; border-top: 1px solid #e4e4e4; padding: 0 1px 0 7px; }
.group-h { height: 12px; font-size: 9px; line-height: 13px; }
.tree { margin-top: 2px; width: 239px; height: 159px; border: 1px solid #8f8f8f; background: #fff; padding: 1px 0 0 5px; }
.row { height: 11.650px; display: flex; align-items: center; font-size: 9px; color: #333; white-space: nowrap; }
.row svg { width: 11px; height: 11px; margin-right: 4px; flex: none; }
.txs-i { width: 11px; margin-right: 4px; flex: none; font: 700 12px/11px "Liberation Serif", serif; color: #111; text-align: center; border-bottom: 1px solid #b58f2c; }
.exp { width: 7px; height: 7px; border: 1px solid #999; font-size: 7px; line-height: 5px; text-align: center; color: #555; margin-right: 4px; flex: none; background: #fff; }
.noexp { width: 7px; height: 1px; background: #aaa; margin-right: 4px; flex: none; }
.root strong { font-weight: 700; color: #222; }
.kids { border-left: 1px dotted #aaa; width: 120px; margin-left: 16px; }
.kids .row { margin-left: -3px; }
.checks { margin-top: 8px; }
.chk { display: flex; align-items: center; height: 19px; padding-left: 1px; font-size: 8.800px; color: #333; }
.cb { width: 9px; height: 9px; border: 1px solid #888; background: #fff; font-size: 8px; line-height: 7px; text-align: center; margin-right: 2px; color: #444; }
.btns { display: flex; gap: 13.500px; margin-top: 1px; }
.btn { width: 53px; height: 14px; padding: 0; background: #ececec; border: 1px solid #8d8d8d; border-radius: 2px; font: 9px/12px "Noto Sans CJK SC", sans-serif; color: #333; }
.btn.off { color: #999; border-color: #b5b5b5; }

.hl { position: absolute; border-style: solid; border-color: #e416d8; background: transparent; }
.hl1 { left: 377px; top: 332px; width: 130px; height: 19px; border-width: 5px 4px 3px; }
.hl2 { left: 374px; top: 353px; width: 138px; height: 21px; border-width: 4px 5px 6px 6px; }
.arrows { position: absolute; left: 410px; top: 360px; filter: blur(.3px); }

.tip { position: absolute; left: 845px; top: 458px; width: 131px; height: 44px; background: #fefcdd; border: 1px solid #555; border-radius: 8px 8px 0 0; border-left: 0; }
.tip-x { position: absolute; right: 6px; top: 7px; width: 12px; height: 12px; background: #fff; border: 1px solid #222; font: 700 9px/10px "Liberation Sans", sans-serif; text-align: center; color: #111; }
.tip-t { position: absolute; left: 96px; top: 20px; font-size: 9.500px; color: #333; }
.corner { position: absolute; left: 985px; top: 518px; width: 12px; height: 12px; background: #7fa6c9; }
.speed { position: absolute; left: 940px; top: 502px; width: 50px; height: 29px; background: #f3f5f7; border-radius: 0 15px 15px 0; display: flex; align-items: center; font: 7px/11px "Liberation Sans", sans-serif; color: #333; text-align: right; }
.speed span { width: 32px; }
.plus { width: 13px; height: 13px; margin-left: 3px; border-radius: 50%; background: #3a8ae0; color: #fff; font: 700 11px/12px "Liberation Sans", sans-serif; text-align: center; border: 1px solid #bcd; }

.wm { position: absolute; left: 765px; top: 462px; width: 180px; height: 85px; background: #212f55; display: flex; align-items: center; padding-left: 15px; gap: 14px; color: #c7ccd6; }
.wm-t { display: flex; flex-direction: column; }
.wm-t strong { font-size: 24px; line-height: 28px; font-weight: 500; letter-spacing: 3px; white-space: nowrap; }
.wm-t span { font: 9px/11px "Liberation Sans", sans-serif; letter-spacing: 2.300px; color: #9aa3b8; white-space: nowrap; margin-top: 3px; }
```
